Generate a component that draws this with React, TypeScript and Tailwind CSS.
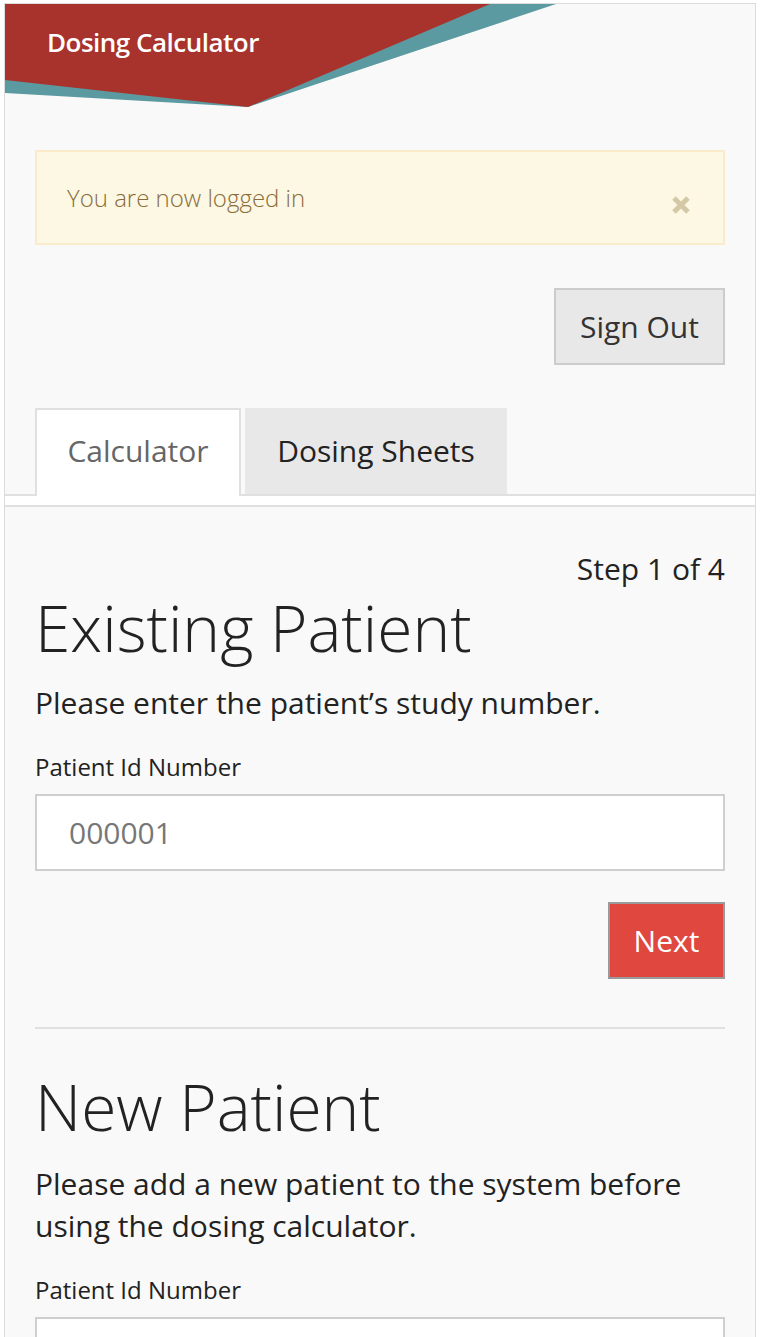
import React from 'react';

const font = { fontFamily: '"Open Sans", "Noto Sans", sans-serif' };

const Banner = () => (
  <div className="relative h-[103px]">
    <svg className="absolute inset-0" width="751" height="103" viewBox="0 0 751 103">
      <polygon points="0,0 551,0 243,103 0,89" fill="#5b9aa0" />
      <polygon points="0,0 485,0 243,103 0,76" fill="#a8332d" />
    </svg>
    <h1 className="relative pl-[42px] pt-[22px] text-[26px] font-semibold leading-[32px] tracking-[-0.5px] text-white">
      Dosing Calculator
    </h1>
  </div>
);

const Field = ({ value }: { value?: string }) => (
  <div>
    <label className="block text-[24px] leading-[32px] text-[#222]">Patient Id Number</label>
    <div className="mt-[11px] flex h-[77px] items-center border-2 border-[#cfcfcf] bg-white px-[32px] text-[30px] text-[#777]">
      {value}
    </div>
  </div>
);

export default function App() {
  return (
    <div className="min-h-screen bg-white pt-[3px] pl-[4px] pr-[6px]" style={font}>
      <div className="h-[1334px] overflow-hidden border border-b-0 border-[#dcdcdc] bg-[#f9f9f9]">
        <Banner />

        <div className="px-[30px] pt-[43px]">
          <div className="flex h-[95px] items-center justify-between border-2 border-[#faebcc] bg-[#fcf8e3] pl-[30px] pr-[32px]">
            <span className="text-[24px] font-light text-[#8a6d3b]">You are now logged in</span>
            <svg width="20" height="20" viewBox="0 0 20 20" className="mt-[14px]">
              <path d="M3 3 L17 17 M17 3 L3 17" stroke="#d5c8a7" strokeWidth="5" />
            </svg>
          </div>

          <div className="mt-[43px] flex justify-end">
            <button className="h-[77px] w-[171px] border-2 border-[#cccccc] bg-[#e8e8e8] text-[30px] text-[#333]">
              Sign Out
            </button>
          </div>
        </div>

        <div className="mt-[43px] flex border-b-2 border-[#e0e0e0] px-[30px]">
          <div className="-mb-[2px] flex h-[88px] w-[206px] items-center justify-center border-2 border-b-0 border-[#e0e0e0] bg-white pb-[6px] text-[30px] text-[#666]">
            Calculator
          </div>
          <div className="ml-[4px] flex h-[86px] w-[262px] items-center justify-center bg-[#e8e8e8] pb-[2px] text-[30px] text-[#222]">
            Dosing Sheets
          </div>
        </div>
        <div className="h-[11px] border-b-2 border-[#e0e0e0] bg-white" />

        <div className="px-[30px]">
          <div className="mt-[44px] text-right text-[30px] leading-[36px] text-[#222]">Step 1 of 4</div>
          <h2 className="mt-[1px] text-[64px] font-light leading-[80px] text-[#222]">Existing Patient</h2>
          <p className="mt-[14px] text-[30px] leading-[42px] text-[#222]">Please enter the patient’s study number.</p>
          <div className="mt-[27px]">
            <Field value="000001" />
          </div>
          <div className="mt-[31px] flex justify-end">
            <button className="h-[77px] w-[117px] border-2 border-[#9a9a9a] bg-[#e0483f] text-[30px] text-white">
              Next
            </button>
          </div>
          <hr className="mt-[48px] border-t-2 border-[#e0e0e0]" />
          <h2 className="mt-[38px] text-[64px] font-light leading-[80px] text-[#222]">New Patient</h2>
          <p className="mt-[16px] text-[30px] leading-[42px] text-[#222]">
            Please add a new patient to the system before using the dosing calculator.
          </p>
          <div className="mt-[27px]">
            <Field />
          </div>
        </div>
      </div>
    </div>
  );
}
